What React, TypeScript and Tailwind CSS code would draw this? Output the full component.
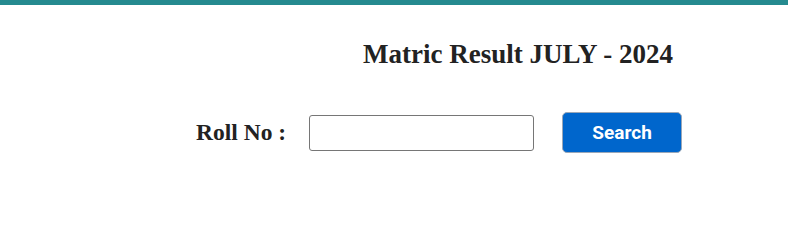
import React from "react";

export default function App() {
  return (
    <div className="w-[788px] h-[235px] bg-white overflow-hidden">
      <div className="h-[5px] bg-[#258a8f]" />
      <div className="pl-[363px] mt-[36px]">
        <h2
          className="text-[27px] leading-none font-bold text-[#222222] whitespace-nowrap"
          style={{ fontFamily: '"Liberation Serif", "Times New Roman", serif' }}
        >
          Matric Result JULY - 2024
        </h2>
      </div>
      <div className="flex items-center pl-[196px] mt-[44px]">
        <label
          className="text-[23.5px] leading-none font-bold text-[#222222] whitespace-nowrap"
          style={{ fontFamily: '"Liberation Serif", "Times New Roman", serif' }}
        >
          Roll No :
        </label>
        <input
          type="text"
          className="ml-[23px] w-[225px] h-[36px] border border-[#767676] rounded-[3px] bg-white outline-none"
        />
        <button
          className="ml-[28px] w-[120px] h-[41px] bg-[#0066cc] border border-[#9aa7b8] rounded-[5px] text-white text-[19px] font-bold leading-none"
          style={{ fontFamily: 'Roboto, "Liberation Sans", sans-serif' }}
        >
          Search
        </button>
      </div>
    </div>
  );
}
